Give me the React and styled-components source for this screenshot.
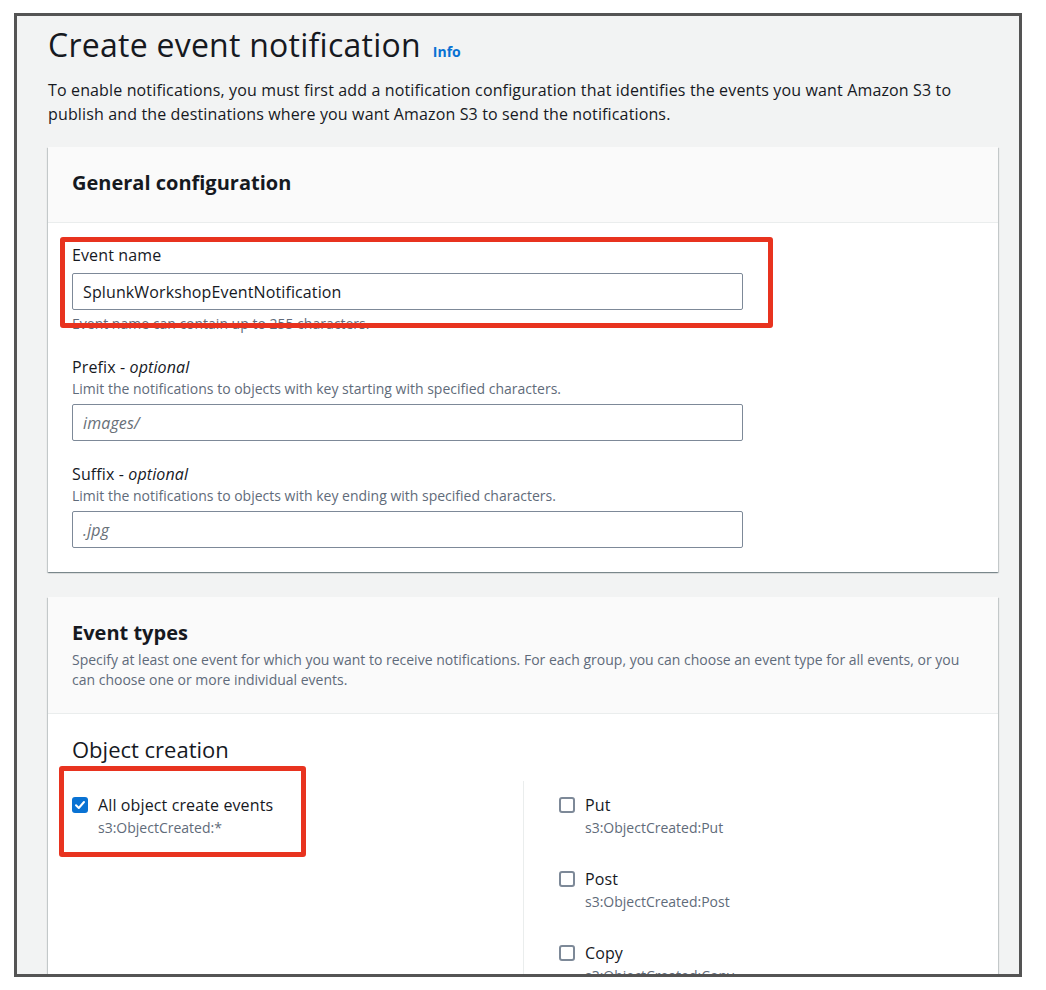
import React from "react";
import styled, { createGlobalStyle } from "styled-components";

const Global = createGlobalStyle`
  html, body { margin: 0; padding: 0; background: #ffffff; }
  body { font-family: "Open Sans", "Noto Sans", Arial, sans-serif; color: #16191f; }
  * { box-sizing: border-box; }
`;

const Frame = styled.div`
  margin: 13px 0 0 14px;
  width: 1008px;
  height: 964px;
  border: 3px solid #545454;
  background: #f2f3f3;
  overflow: hidden;
  padding: 9px 21px 0 31px;
`;

const TitleRow = styled.div`
  display: flex;
  align-items: baseline;
  gap: 12px;
`;

const Title = styled.h1`
  margin: 0;
  font-size: 32px;
  line-height: 40px;
  font-weight: 400;
  letter-spacing: 0.25px;
  color: #16191f;
`;

const InfoLink = styled.a`
  font-size: 14px;
  font-weight: 700;
  color: #0972d3;
  text-decoration: none;
`;

const Intro = styled.p`
  margin: 13px 0 21px;
  font-size: 16px;
  line-height: 24px;
  letter-spacing: 0.14px;
  color: #16191f;
`;

const Card = styled.section`
  background: #ffffff;
  box-shadow: 0 1px 1px 0 rgba(0, 28, 36, 0.3), 1px 1px 1px 0 rgba(0, 28, 36, 0.15),
    -1px 1px 1px 0 rgba(0, 28, 36, 0.15);
  margin-bottom: 25px;
`;

const CardHeader = styled.div`
  background: #fafafa;
  border-bottom: 1px solid #eaeded;
  padding: 22px 24px ${(p) => p.$pb || "25px"};
`;

const CardTitle = styled.h2`
  margin: 0;
  font-size: 20px;
  line-height: 28px;
  font-weight: 700;
  color: #16191f;
`;

const CardDesc = styled.p`
  margin: 3px 0 0;
  font-size: 14px;
  line-height: 20px;
  color: #5f6b7a;
`;

const CardBody = styled.div`
  padding: ${(p) => p.$pad || "21px 24px 24px"};
`;

const Field = styled.div`
  position: relative;
  & + & {
    margin-top: 22px;
  }
`;

const Label = styled.label`
  display: block;
  font-size: 16px;
  line-height: 22px;
  letter-spacing: 0.12px;
  color: #16191f;
  em {
    font-style: italic;
  }
`;

const Hint = styled.div`
  font-size: 14px;
  line-height: 20px;
  color: #5f6b7a;
  margin-top: ${(p) => p.$mt || "1px"};
`;

const Input = styled.div`
  width: 671px;
  height: 37px;
  border: 1px solid #7d8998;
  border-radius: 2px;
  background: #ffffff;
  padding: 0 10px;
  display: flex;
  align-items: center;
  font-size: 16px;
  letter-spacing: 0.12px;
  color: ${(p) => (p.$placeholder ? "#687078" : "#16191f")};
  font-style: ${(p) => (p.$placeholder ? "italic" : "normal")};
  margin-top: ${(p) => p.$mt || "5px"};
`;

const Annotation = styled.div`
  position: absolute;
  left: ${(p) => p.$l}px;
  top: ${(p) => p.$t}px;
  width: ${(p) => p.$w}px;
  height: ${(p) => p.$h}px;
  border: 5px solid #e8331f;
  border-radius: 3px;
  pointer-events: none;
  z-index: 2;
`;

const SubHeading = styled.h3`
  margin: 0;
  font-size: 22px;
  line-height: 28px;
  font-weight: 400;
  color: #16191f;
`;

const Columns = styled.div`
  display: grid;
  grid-template-columns: 1fr 1fr;
  margin-top: 18px;
`;

const Column = styled.div`
  display: flex;
  flex-direction: column;
  gap: 30px;
  padding: 13px 0 0 ${(p) => (p.$divided ? "35px" : "0")};
  border-left: ${(p) => (p.$divided ? "1px solid #eaeded" : "none")};
  min-height: 300px;
`;

const CheckItem = styled.div`
  position: relative;
  display: grid;
  grid-template-columns: 16px 1fr;
  column-gap: 10px;
`;

const Box = styled.span`
  width: 16px;
  height: 16px;
  margin-top: 3px;
  border-radius: 3px;
  border: ${(p) => (p.$checked ? "none" : "2px solid #7d8998")};
  background: ${(p) => (p.$checked ? "#0972d3" : "#ffffff")};
  display: flex;
  align-items: center;
  justify-content: center;
`;

const CheckLabel = styled.div`
  font-size: 16px;
  line-height: 22px;
  letter-spacing: 0.12px;
  color: #16191f;
`;

const CheckSub = styled.div`
  grid-column: 2;
  margin-top: 2px;
  font-size: 14px;
  line-height: 20px;
  color: #5f6b7a;
`;

function Checkbox({ checked, label, sub, children }) {
  return (
    <CheckItem>
      <Box $checked={checked}>
        {checked && (
          <svg width="12" height="12" viewBox="0 0 12 12">
            <polyline
              points="2,6.2 4.8,9 10,3"
              fill="none"
              stroke="#ffffff"
              strokeWidth="2"
              strokeLinecap="round"
              strokeLinejoin="round"
            />
          </svg>
        )}
      </Box>
      <CheckLabel>{label}</CheckLabel>
      <CheckSub>{sub}</CheckSub>
      {children}
    </CheckItem>
  );
}

export default function App() {
  return (
    <>
      <Global />
      <Frame>
        <TitleRow>
          <Title>Create event notification</Title>
          <InfoLink href="#">Info</InfoLink>
        </TitleRow>
        <Intro>
          To enable notifications, you must first add a notification configuration that identifies the
          events you want Amazon S3 to publish and the destinations where you want Amazon S3 to send
          the notifications.
        </Intro>

        <Card>
          <CardHeader>
            <CardTitle>General configuration</CardTitle>
          </CardHeader>
          <CardBody>
            <Field>
              <Annotation $l={-12} $t={-7} $w={713} $h={91} />
              <Label>Event name</Label>
              <Input $mt="7px">SplunkWorkshopEventNotification</Input>
              <Hint $mt="4px">Event name can contain up to 255 characters.</Hint>
            </Field>
            <Field>
              <Label>
                Prefix - <em>optional</em>
              </Label>
              <Hint>Limit the notifications to objects with key starting with specified characters.</Hint>
              <Input $placeholder>images/</Input>
            </Field>
            <Field>
              <Label>
                Suffix - <em>optional</em>
              </Label>
              <Hint>Limit the notifications to objects with key ending with specified characters.</Hint>
              <Input $placeholder>.jpg</Input>
            </Field>
          </CardBody>
        </Card>

        <Card>
          <CardHeader $pb="23px">
            <CardTitle>Event types</CardTitle>
            <CardDesc>
              Specify at least one event for which you want to receive notifications. For each group,
              you can choose an event type for all events, or you can choose one or more individual
              events.
            </CardDesc>
          </CardHeader>
          <CardBody $pad="21px 24px 24px">
            <SubHeading>Object creation</SubHeading>
            <Columns>
              <Column>
                <Checkbox checked label="All object create events" sub="s3:ObjectCreated:*">
                  <Annotation $l={-13} $t={-28} $w={247} $h={91} />
                </Checkbox>
              </Column>
              <Column $divided>
                <Checkbox label="Put" sub="s3:ObjectCreated:Put" />
                <Checkbox label="Post" sub="s3:ObjectCreated:Post" />
                <Checkbox label="Copy" sub="s3:ObjectCreated:Copy" />
              </Column>
            </Columns>
          </CardBody>
        </Card>
      </Frame>
    </>
  );
}
